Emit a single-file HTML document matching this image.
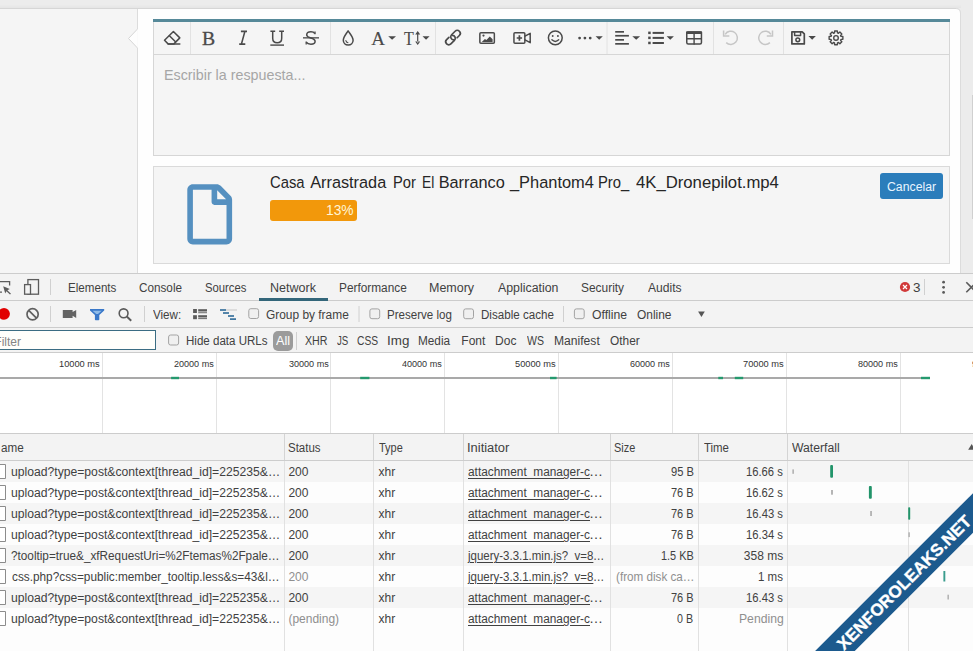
<!DOCTYPE html>
<html><head><meta charset="utf-8">
<style>
*{box-sizing:border-box;margin:0;padding:0}
html,body{width:973px;height:651px;overflow:hidden;background:#ececec;font-family:"Liberation Sans",sans-serif;position:relative}
.a{position:absolute}
.t{position:absolute;white-space:pre;line-height:1}
svg{position:absolute;left:0;top:0;overflow:visible}
</style></head><body>
<!-- ===== PAGE BACKGROUNDS ===== -->
<div class="a" style="left:0;top:5px;width:961px;height:3px;background:linear-gradient(#ebebeb,#e5e5e5)"></div>
<div class="a" style="left:0;top:8px;width:956px;height:1px;background:#d6d6d6"></div>
<div class="a" style="left:0;top:9px;width:137px;height:264px;background:#f5f5f5"></div>
<div class="a" style="left:137px;top:9px;width:1px;height:264px;background:#dcdcdc"></div>
<div class="a" style="left:138px;top:9px;width:822px;height:264px;background:#fefefe;border-top-right-radius:4px"></div>
<div class="a" style="left:960px;top:13px;width:1px;height:260px;background:#dcdcdc"></div>
<div class="a" style="left:971.5px;top:95px;width:1.5px;height:124px;background:#d0d0d0"></div>
<svg width="973" height="651">
 <path d="M137.5 29 L128.5 38.5 L137.5 48" fill="#fefefe" stroke="#d6d6d6" stroke-width="1"/>
 <rect x="137.2" y="29.5" width="1.6" height="18" fill="#fefefe"/>
 <path d="M956 8.5 Q960.5 8.5 960.5 13" fill="none" stroke="#dcdcdc"/>
</svg>
<!-- editor -->
<div class="a" style="left:153px;top:19px;width:797px;height:137px;background:#f5f5f5;border:1px solid #d6d6d6;border-top:3px solid #568999"></div>
<div class="a" style="left:153px;top:19px;width:797px;height:3px;background:#568999"></div>
<div class="a" style="left:154px;top:54px;width:795px;height:1px;background:#d6d6d6"></div>
<!-- attachment -->
<div class="a" style="left:153px;top:166px;width:797px;height:98px;background:#f5f5f5;border:1px solid #dadada"></div>
<div class="a" style="left:270px;top:200px;width:87px;height:21px;background:#f2980b;border-radius:3px"></div>
<div class="a" style="left:880px;top:173px;width:63px;height:26px;background:#2b7dbb;border-radius:3px"></div>

<!-- ===== DEVTOOLS BACKGROUNDS ===== -->
<div class="a" style="left:0;top:273px;width:973px;height:378px;background:#f3f3f3"></div>
<div class="a" style="left:0;top:273px;width:973px;height:1px;background:#cccccc"></div>
<div class="a" style="left:0;top:300px;width:973px;height:1px;background:#cccccc"></div>
<div class="a" style="left:0;top:327px;width:973px;height:1px;background:#cccccc"></div>
<div class="a" style="left:259px;top:298.4px;width:69px;height:2.2px;background:#33667a"></div>
<!-- filter input -->
<div class="a" style="left:-2px;top:330px;width:158px;height:20px;background:#fffffb;border:1px solid #3b6d82"></div>
<div class="a" style="left:273px;top:330.5px;width:19.5px;height:20.5px;background:#9b9b9b;border-radius:5px"></div>
<div class="a" style="left:0;top:352px;width:973px;height:1px;background:#cccccc"></div>
<!-- overview -->
<div class="a" style="left:0;top:353px;width:973px;height:80px;background:#ffffff"></div>
<div class="a" style="left:0;top:433px;width:973px;height:1px;background:#cccccc"></div>
<!-- header -->
<div class="a" style="left:0;top:460px;width:973px;height:1px;background:#cdcdcd"></div>
<!-- rows -->
<div class="a" style="left:0;top:461px;width:973px;height:190px;background:#fdfdfd"></div>
<div class="a" style="left:0;top:461px;width:973px;height:21px;background:#f5f5f5"></div>
<div class="a" style="left:0;top:503px;width:973px;height:21px;background:#f5f5f5"></div>
<div class="a" style="left:0;top:545px;width:973px;height:21px;background:#f5f5f5"></div>
<div class="a" style="left:0;top:587px;width:973px;height:21px;background:#f5f5f5"></div>

<svg width="973" height="651">
 <!-- ===== editor toolbar icons ===== -->
 <g stroke="#e2e2e2" stroke-width="1">
  <path d="M190.5 22 V54 M330.5 22 V54 M435.5 22 V54 M607 22 V54 M713.5 22 V54 M783.5 22 V54"/>
 </g>
 <g fill="none" stroke="#4a4a4a" stroke-width="1.5" stroke-linejoin="round" stroke-linecap="round">
  <path d="M168.3 44.1 L164.5 40.3 L173.4 31.5 L179.8 37.9 L173.7 44.1 Z"/>
  <path d="M168.3 44.1 H179.8"/>
  <path d="M169.4 35.7 L175.5 41.8"/>
  <!-- U -->
  <path d="M270.4 31.2 H275.2 M279.2 31.2 H284 M272.7 31.2 V38.2 C272.7 41 274.5 42.7 277.2 42.7 C279.9 42.7 281.7 41 281.7 38.2 V31.2" stroke-width="1.5" stroke-linecap="butt"/>
  <!-- S -->
  <path d="M314.9 33.6 C314.1 32.4 312.7 31.8 310.9 31.8 C308.4 31.8 306.7 33.1 306.7 34.9 C306.7 38.5 315.1 37.5 315.1 41.3 C315.1 43.2 313.4 44.3 310.9 44.3 C308.7 44.3 307.1 43.5 306.3 42.2" stroke-width="1.5" stroke-linecap="butt"/>
  <path d="M315 31.4 V34.3 M306.2 41.6 V44.4" stroke-width="1.3" stroke-linecap="butt"/>
  <!-- italic I -->
  <path d="M240.9 31.4 H247 M239.2 44.1 H245.3 M244.9 31.4 L241.4 44.1" stroke-width="1.6" stroke-linecap="butt"/>
  <!-- droplet -->
  <path d="M348.1 30.8 C346 34.2 343.3 37 343.3 40.3 C343.3 43.1 345.4 45 348.2 45 C351 45 353.1 43.1 353.1 40.3 C353.1 37 350.3 34.2 348.1 30.8 Z"/>
  <path d="M345.9 40.6 C346.1 41.8 346.8 42.5 348 42.7" stroke-width="1.1"/>
  <!-- link -->
  <g transform="translate(453 37.6) rotate(-45)" stroke-width="1.7">
   <path d="M-2.8 -3 L-6 -3 A3 3 0 0 0 -6 3 L-1 3 A3 3 0 0 0 1.12 -2.12"/>
   <path d="M2.8 3 L6 3 A3 3 0 0 0 6 -3 L1 -3 A3 3 0 0 0 -1.12 2.12"/>
  </g>
  <!-- image -->
  <rect x="479.85" y="32.75" width="14.5" height="10.4" rx="1"/>
  <!-- video -->
  <rect x="513.95" y="32.75" width="10.9" height="10.5" rx="1"/>
  <path d="M525 36.2 L530.2 33.3 V42.7 L525 39.8"/>
  <path d="M519.4 35.3 V40.7 M516.7 38 H522.1" stroke-width="1.7" stroke-linecap="butt"/>
  <!-- smiley -->
  <circle cx="555.3" cy="37.8" r="6.9"/>
  <path d="M551.9 39.8 Q555.3 43 558.7 39.8" stroke-width="1.4"/>
  <!-- table -->
  <rect x="686.75" y="32.1" width="14.7" height="11.95" rx="1.5" stroke-width="1.5"/>
  <path d="M694.1 33 V44 M687 38.8 H701.3" stroke-width="1.4"/>
  <!-- save -->
  <path d="M791.9 31.8 H802.2 L804.3 33.9 V43.9 H791.9 Z" stroke-width="1.7"/>
  <path d="M794.6 31.8 V35.6 H800.6 V31.8" stroke-width="1.5"/>
  <circle cx="797.8" cy="39.8" r="1.9" stroke-width="1.5"/>
  <!-- gear -->
  <path d="M842.87 36.53 L842.87 39.27 L840.98 39.39 L840.58 40.37 L841.82 41.79 L839.89 43.72 L838.47 42.48 L837.49 42.88 L837.37 44.77 L834.63 44.77 L834.51 42.88 L833.53 42.48 L832.11 43.72 L830.18 41.79 L831.42 40.37 L831.02 39.39 L829.13 39.27 L829.13 36.53 L831.02 36.41 L831.42 35.43 L830.18 34.01 L832.11 32.08 L833.53 33.32 L834.51 32.92 L834.63 31.03 L837.37 31.03 L837.49 32.92 L838.47 33.32 L839.89 32.08 L841.82 34.01 L840.58 35.43 L840.98 36.41 Z" stroke-width="1.4"/>
  <circle cx="836" cy="37.9" r="2.3" stroke-width="1.4"/>
 </g>
 <g fill="#4a4a4a">
  <rect x="270.3" y="44.4" width="13.7" height="1.4"/>
  <rect x="303" y="37.2" width="16" height="1.3"/>
  <path d="M388.2 36.2 H396 L392.1 39.7 Z M422.5 36.2 H429.6 L426.05 39.7 Z M595.6 36.2 H602.8 L599.2 39.7 Z M632.3 36.2 H640.1 L636.2 39.7 Z M666.6 36.2 H673.9 L670.25 39.7 Z M808.4 36.1 H815.9 L812.15 39.8 Z"/>
  <path d="M417.1 33.5 H418.3 V42.5 H417.1 Z M415.2 34.6 L417.7 31 L420.2 34.6 Z M415.2 41.4 L417.7 45 L420.2 41.4 Z"/>
  <circle cx="483.5" cy="35.6" r="1.1"/>
  <path d="M481.8 41.9 L484.9 38.9 L486.4 40.1 L489.8 36.4 L492.6 39.2 V41.9 Z"/>
  <circle cx="552.7" cy="36" r="0.95"/><circle cx="557.9" cy="36" r="0.95"/>
  <circle cx="579.6" cy="38.1" r="1.4"/><circle cx="584.9" cy="38.1" r="1.4"/><circle cx="590.2" cy="38.1" r="1.4"/>
  <rect x="615.2" y="31" width="8.8" height="1.7"/><rect x="615.2" y="34.9" width="13.7" height="1.7"/>
  <rect x="615.2" y="39" width="8.8" height="1.7"/><rect x="615.2" y="43" width="13.7" height="1.7"/>
  <rect x="648.2" y="31.6" width="2.5" height="2.5"/><rect x="648.2" y="36.6" width="2.5" height="2.5"/><rect x="648.2" y="41.7" width="2.5" height="2.5"/>
  <rect x="652.6" y="31.9" width="11.3" height="2"/><rect x="652.6" y="36.9" width="11.3" height="2"/><rect x="652.6" y="42" width="11.3" height="2"/>
  <rect x="686" y="31.3" width="16.2" height="2.6" rx="1"/>
 </g>
 <g fill="none" stroke="#c6c6c6" stroke-width="1.5">
  <path d="M725.2 34.3 A6.6 6.6 0 1 1 726.2 42.6"/>
  <path d="M723.6 30.4 V36.1 H729.3"/>
  <path d="M770.9 34.3 A6.6 6.6 0 1 0 769.9 42.6"/>
  <path d="M772.5 30.4 V36.1 H766.8"/>
 </g>
 <!-- file icon -->
 <g transform="translate(187.3 184.2) scale(0.1167 0.1176)"><path fill="#5590c0" d="M369.9 97.9L286 14C277 5 264.8-.1 252.1-.1H48C21.5 0 0 21.5 0 48v416c0 26.5 21.5 48 48 48h288c26.5 0 48-21.5 48-48V131.9c0-12.7-5.1-25-14.1-34zM332.1 128H256V51.9l76.1 76.1zM48 464V48h160v104c0 13.3 10.7 24 24 24h104v288H48z"/></g>

 <!-- ===== devtools icons ===== -->
 <g stroke="#d0d0d0" stroke-width="1">
  <path d="M50.5 279 V295 M924.5 279 V295 M50.5 306 V322 M144.5 306 V322 M359 306 V322 M563.5 306 V322 M296.5 332 V350"/>
 </g>
 <g fill="none" stroke="#5c5c5c" stroke-width="1.3">
  <path d="M-1 281.6 H9.6 V285.5 M2 292.2 H-1"/>
  <rect x="27.9" y="279.6" width="10.6" height="14.6"/>
  <rect x="24.6" y="284.6" width="5.9" height="9.6" fill="#f3f3f3"/>
 </g>
 <path d="M3.2 286.2 L9.8 288.9 L7.4 290.2 L11 293.8 L10 294.6 L6.4 291.2 L5.2 293.4 Z" fill="#5c5c5c"/>
 <circle cx="4" cy="313.8" r="5.9" fill="#e10000"/>
 <circle cx="32.6" cy="314.3" r="5.6" fill="none" stroke="#606060" stroke-width="1.7"/>
 <path d="M28.7 310.4 L36.5 318.2" stroke="#606060" stroke-width="1.7"/>
 <path d="M62.8 309.9 H72.6 V312 L76.2 309.9 V317.9 L72.6 315.8 V317.9 H62.8 Z" fill="#646464"/>
 <path d="M90 309 H104.2 V310.5 L99.3 315 V319.5 Q99.3 320.3 98.5 320.3 H95.7 Q94.9 320.3 94.9 319.5 V315 L90 310.5 Z" fill="#3a78c9"/>
 <path d="M92.5 310.8 H101.7 L98 314 H96.2 Z" fill="#8fbbe8"/>
 <circle cx="123.6" cy="313.3" r="4.4" fill="none" stroke="#5a5a5a" stroke-width="1.6"/>
 <path d="M126.8 316.5 L131.2 320.8" stroke="#5a5a5a" stroke-width="1.9"/>
 <g fill="#5a5a5a">
  <rect x="193.1" y="309" width="3.8" height="4"/><rect x="198.2" y="309.2" width="8.8" height="2.3"/><rect x="198.2" y="312.3" width="8.8" height="0.9"/>
  <rect x="193.1" y="315.2" width="3.8" height="4"/><rect x="198.2" y="315.2" width="8.8" height="2.3"/><rect x="198.2" y="318.2" width="8.8" height="0.9"/>
 </g>
 <g fill="#2e6a98">
  <rect x="220" y="309.2" width="6" height="1.6"/><rect x="223" y="312.2" width="6" height="1.6"/>
  <rect x="228" y="315.2" width="6" height="1.6"/><rect x="230" y="318.3" width="6" height="1.6"/>
 </g>
 <rect x="226" y="309.2" width="11" height="1.6" fill="#d6d6d6"/>
 <g fill="#f0f0f0" stroke="#a3a3a3" stroke-width="1">
  <rect x="248.8" y="308.7" width="9.8" height="9.8" rx="2"/>
  <rect x="369.9" y="308.9" width="9.8" height="9.8" rx="2"/>
  <rect x="463.7" y="308.9" width="9.8" height="9.8" rx="2"/>
  <rect x="574.4" y="308.9" width="9.8" height="9.8" rx="2"/>
  <rect x="168.6" y="335" width="10" height="10" rx="2"/>
 </g>
 <path d="M698.1 311.4 H704.8 L701.45 316.9 Z" fill="#555"/>
 <circle cx="905" cy="287" r="5.1" fill="#d13a3a"/>
 <path d="M903 285 L907 289 M907 285 L903 289" stroke="#fff" stroke-width="1.2"/>
 <g fill="#5a5a5a"><circle cx="943.6" cy="282.2" r="1.4"/><circle cx="943.6" cy="287.3" r="1.4"/><circle cx="943.6" cy="292.4" r="1.4"/></g>
 <path d="M966.3 282.3 L976.3 292.3 M976.3 282.3 L966.3 292.3" stroke="#5a5a5a" stroke-width="1.6"/>

 <!-- overview -->
 <g stroke="#e3e3e3" stroke-width="1">
  <path d="M102.5 353 V433 M216.5 353 V433 M330.5 353 V433 M444.5 353 V433 M558.5 353 V433 M672.5 353 V433 M786.5 353 V433 M900.5 353 V433"/>
 </g>
 <rect x="0" y="377" width="930" height="2" fill="#a9a9a9"/>
 <g fill="#25996e">
  <rect x="171.1" y="376.8" width="7.9" height="2.4"/><rect x="360.2" y="376.8" width="9.2" height="2.4"/>
  <rect x="550" y="376.8" width="6.6" height="2.4"/><rect x="718.3" y="376.8" width="4.7" height="2.4"/>
  <rect x="734.8" y="376.8" width="8.4" height="2.4"/><rect x="921" y="376.8" width="9" height="2.4"/>
 </g>
 <!-- table grid -->
 <g stroke="#d4d4d4" stroke-width="1">
  <path d="M284.5 434 V460 M373.5 434 V460 M463.5 434 V460 M610.5 434 V460 M698.5 434 V460 M787.5 434 V460"/>
 </g>
 <g stroke="#e1e1e1" stroke-width="1">
  <path d="M284.5 461 V651 M373.5 461 V651 M463.5 461 V651 M610.5 461 V651 M698.5 461 V651 M787.5 461 V651 M908.5 461 V651"/>
 </g>
 <path d="M968.2 449.8 L971.7 444 L975.2 449.8 Z" fill="#555"/>
 <!-- row doc icons -->
 <g fill="#ffffff" stroke="#8c8c8c" stroke-width="1">
  <path d="M-3 464.5 H5.5 V478.5 H-3"/><path d="M-3 485.5 H5.5 V499.5 H-3"/><path d="M-3 506.5 H5.5 V520.5 H-3"/><path d="M-3 527.5 H5.5 V541.5 H-3"/>
  <path d="M-3 548.5 H5.5 V562.5 H-3"/><path d="M-3 569.5 H5.5 V583.5 H-3"/><path d="M-3 590.5 H5.5 V604.5 H-3"/><path d="M-3 611.5 H5.5 V625.5 H-3"/>
 </g>
 <!-- waterfall bars -->
 <g fill="#b5b5b5">
  <rect x="792.3" y="469.4" width="1.7" height="4.4"/><rect x="831" y="490" width="2" height="4.7"/>
  <rect x="870.1" y="511" width="1.9" height="5"/><rect x="908.3" y="532.3" width="1.6" height="4.8"/>
  <rect x="947.4" y="594.7" width="1.6" height="4.8"/>
 </g>
 <g fill="#22946a">
  <rect x="830.2" y="465" width="2.8" height="12.8" rx="1"/><rect x="868.9" y="486" width="2.9" height="12.7" rx="1"/>
  <rect x="908.2" y="507.2" width="2" height="12.5" rx="0.8"/>
 </g>
 <rect x="943.4" y="571" width="1.9" height="10.5" fill="#3a9d8e"/>
</svg>
<div class="t" style="left:163.91px;top:68.33px;font-size:14.5px;color:#a6a6a6;transform:scaleX(0.9858);transform-origin:left top;">Escribir la respuesta...</div>
<div class="t" style="left:269.89px;top:173.80px;font-size:16.3px;color:#262626;transform:scaleX(0.9108);transform-origin:left top;">Casa</div>
<div class="t" style="left:310.20px;top:173.80px;font-size:16.3px;color:#262626;">Arrastrada</div>
<div class="t" style="left:392.90px;top:173.80px;font-size:16.3px;color:#262626;transform:scaleX(0.9042);transform-origin:left top;">Por</div>
<div class="t" style="left:421.55px;top:173.80px;font-size:16.3px;color:#262626;transform:scaleX(0.8462);transform-origin:left top;">El</div>
<div class="t" style="left:438.70px;top:173.80px;font-size:16.3px;color:#262626;">Barranco</div>
<div class="t" style="left:509.90px;top:173.80px;font-size:16.3px;color:#262626;transform:scaleX(1.0072);transform-origin:left top;">_Phantom4</div>
<div class="t" style="left:598.19px;top:173.80px;font-size:16.3px;color:#262626;transform:scaleX(0.9088);transform-origin:left top;">Pro_</div>
<div class="t" style="left:636.30px;top:173.80px;font-size:16.3px;color:#262626;transform:scaleX(1.0252);transform-origin:left top;">4K_Dronepilot.mp4</div>
<div class="t" style="left:326.41px;top:203.35px;font-size:14px;color:#fff6d6;transform:scaleX(0.9852);transform-origin:left top;">13%</div>
<div class="t" style="left:886.62px;top:180.52px;font-size:12.5px;color:#eaf5ff;transform:scaleX(0.9816);transform-origin:left top;">Cancelar</div>
<div class="t" style="left:202.46px;top:28.89px;font-size:19px;color:#4a4a4a;font-family:'Liberation Serif',serif;transform:scaleX(1.0364);transform-origin:left top;-webkit-text-stroke:0.3px #4a4a4a;">B</div>
<div class="t" style="left:371.30px;top:28.89px;font-size:19px;color:#4a4a4a;font-family:'Liberation Serif',serif;-webkit-text-stroke:0.15px #4a4a4a;">A</div>
<div class="t" style="left:404.20px;top:28.89px;font-size:19px;color:#4a4a4a;font-family:'Liberation Serif',serif;transform:scaleX(0.8417);transform-origin:left top;-webkit-text-stroke:0.15px #4a4a4a;">T</div>
<div class="t" style="left:67.83px;top:281.84px;font-size:12px;color:#414141;transform:scaleX(0.9673);transform-origin:left top;">Elements</div>
<div class="t" style="left:138.72px;top:281.84px;font-size:12px;color:#414141;transform:scaleX(0.9767);transform-origin:left top;">Console</div>
<div class="t" style="left:204.86px;top:281.84px;font-size:12px;color:#414141;transform:scaleX(0.9419);transform-origin:left top;">Sources</div>
<div class="t" style="left:269.76px;top:281.84px;font-size:12px;color:#414141;transform:scaleX(1.0442);transform-origin:left top;">Network</div>
<div class="t" style="left:338.91px;top:281.84px;font-size:12px;color:#414141;transform:scaleX(0.9866);transform-origin:left top;">Performance</div>
<div class="t" style="left:428.86px;top:281.84px;font-size:12px;color:#414141;transform:scaleX(1.0405);transform-origin:left top;">Memory</div>
<div class="t" style="left:497.70px;top:281.84px;font-size:12px;color:#414141;transform:scaleX(1.0293);transform-origin:left top;">Application</div>
<div class="t" style="left:580.71px;top:281.84px;font-size:12px;color:#414141;transform:scaleX(0.9929);transform-origin:left top;">Security</div>
<div class="t" style="left:647.60px;top:281.84px;font-size:12px;color:#414141;transform:scaleX(1.0091);transform-origin:left top;">Audits</div>
<div class="t" style="left:912.88px;top:281.84px;font-size:12px;color:#414141;transform:scaleX(1.1200);transform-origin:left top;">3</div>
<div class="t" style="left:153.30px;top:308.84px;font-size:12px;color:#414141;transform:scaleX(0.9679);transform-origin:left top;">View:</div>
<div class="t" style="left:265.81px;top:308.84px;font-size:12px;color:#414141;transform:scaleX(0.9927);transform-origin:left top;">Group by frame</div>
<div class="t" style="left:387.04px;top:308.84px;font-size:12px;color:#414141;transform:scaleX(0.9636);transform-origin:left top;">Preserve log</div>
<div class="t" style="left:480.73px;top:308.84px;font-size:12px;color:#414141;transform:scaleX(0.9662);transform-origin:left top;">Disable cache</div>
<div class="t" style="left:592.00px;top:308.84px;font-size:12px;color:#414141;transform:scaleX(1.0176);transform-origin:left top;">Offline</div>
<div class="t" style="left:637.20px;top:308.84px;font-size:12px;color:#414141;transform:scaleX(0.9941);transform-origin:left top;">Online</div>
<div class="t" style="left:-5.70px;top:335.64px;font-size:12px;color:#858585;">Filter</div>
<div class="t" style="left:185.54px;top:334.84px;font-size:12px;color:#414141;transform:scaleX(0.9627);transform-origin:left top;">Hide data URLs</div>
<div class="t" style="left:275.80px;top:334.84px;font-size:12px;color:#ffffff;transform:scaleX(1.0538);transform-origin:left top;">All</div>
<div class="t" style="left:304.50px;top:334.84px;font-size:12px;color:#414141;transform:scaleX(0.8880);transform-origin:left top;">XHR</div>
<div class="t" style="left:336.60px;top:334.84px;font-size:12px;color:#414141;transform:scaleX(0.8071);transform-origin:left top;">JS</div>
<div class="t" style="left:356.94px;top:334.84px;font-size:12px;color:#414141;transform:scaleX(0.8565);transform-origin:left top;">CSS</div>
<div class="t" style="left:386.78px;top:334.84px;font-size:12px;color:#414141;transform:scaleX(1.1167);transform-origin:left top;">Img</div>
<div class="t" style="left:418.42px;top:334.84px;font-size:12px;color:#414141;transform:scaleX(0.9812);transform-origin:left top;">Media</div>
<div class="t" style="left:461.30px;top:334.84px;font-size:12px;color:#414141;">Font</div>
<div class="t" style="left:495.10px;top:334.84px;font-size:12px;color:#414141;">Doc</div>
<div class="t" style="left:527.00px;top:334.84px;font-size:12px;color:#414141;transform:scaleX(0.8789);transform-origin:left top;">WS</div>
<div class="t" style="left:553.79px;top:334.84px;font-size:12px;color:#414141;transform:scaleX(1.0091);transform-origin:left top;">Manifest</div>
<div class="t" style="left:610.30px;top:334.84px;font-size:12px;color:#414141;transform:scaleX(0.9900);transform-origin:left top;">Other</div>
<div class="t" style="left:59.43px;top:358.87px;font-size:9.6px;color:#333333;transform:scaleX(0.9659);transform-origin:left top;">10000 ms</div>
<div class="t" style="left:174.40px;top:358.87px;font-size:9.6px;color:#333333;transform:scaleX(0.9429);transform-origin:left top;">20000 ms</div>
<div class="t" style="left:288.60px;top:358.87px;font-size:9.6px;color:#333333;transform:scaleX(0.9429);transform-origin:left top;">30000 ms</div>
<div class="t" style="left:402.10px;top:358.87px;font-size:9.6px;color:#333333;transform:scaleX(0.9429);transform-origin:left top;">40000 ms</div>
<div class="t" style="left:515.43px;top:358.87px;font-size:9.6px;color:#333333;transform:scaleX(0.9659);transform-origin:left top;">50000 ms</div>
<div class="t" style="left:630.40px;top:358.87px;font-size:9.6px;color:#333333;transform:scaleX(0.9429);transform-origin:left top;">60000 ms</div>
<div class="t" style="left:743.43px;top:358.87px;font-size:9.6px;color:#333333;transform:scaleX(0.9659);transform-origin:left top;">70000 ms</div>
<div class="t" style="left:857.90px;top:358.87px;font-size:9.6px;color:#333333;transform:scaleX(0.9429);transform-origin:left top;">80000 ms</div>
<div class="t" style="left:971.90px;top:358.87px;font-size:9.6px;color:#333333;transform:scaleX(0.9429);transform-origin:left top;">90000 ms</div>
<div class="t" style="left:1.00px;top:441.84px;font-size:12px;color:#414141;transform:scaleX(0.9739);transform-origin:left top;">ame</div>
<div class="t" style="left:288.34px;top:441.84px;font-size:12px;color:#414141;transform:scaleX(0.9576);transform-origin:left top;">Status</div>
<div class="t" style="left:378.60px;top:441.84px;font-size:12px;color:#414141;transform:scaleX(0.9115);transform-origin:left top;">Type</div>
<div class="t" style="left:467.12px;top:441.84px;font-size:12px;color:#414141;transform:scaleX(1.0763);transform-origin:left top;">Initiator</div>
<div class="t" style="left:614.49px;top:441.84px;font-size:12px;color:#414141;transform:scaleX(0.9091);transform-origin:left top;">Size</div>
<div class="t" style="left:703.80px;top:441.84px;font-size:12px;color:#414141;transform:scaleX(0.9500);transform-origin:left top;">Time</div>
<div class="t" style="left:792.30px;top:441.84px;font-size:12px;color:#414141;transform:scaleX(1.0174);transform-origin:left top;">Waterfall</div>
<div class="t" style="left:10.59px;top:465.84px;font-size:12px;color:#414141;transform:scaleX(1.0133);transform-origin:left top;">upload?type=post&amp;context[thread_id]=225235&amp;…</div>
<div class="t" style="left:288.40px;top:465.84px;font-size:12px;color:#414141;">200</div>
<div class="t" style="left:378.60px;top:465.84px;font-size:12px;color:#414141;">xhr</div>
<div class="t" style="left:468.20px;top:465.84px;font-size:12px;color:#414141;transform:scaleX(0.9886);transform-origin:left top;text-decoration:underline;text-underline-offset:2.3px;">attachment_manager-c</div>
<div class="t" style="left:589.17px;top:465.84px;font-size:12px;color:#414141;transform:scaleX(1.1667);transform-origin:left top;">…</div>
<div class="t" style="left:670.97px;top:465.84px;font-size:12px;color:#414141;transform:scaleX(0.9304);transform-origin:left top;">95 B</div>
<div class="t" style="left:746.37px;top:465.84px;font-size:12px;color:#414141;transform:scaleX(0.9342);transform-origin:left top;">16.66 s</div>
<div class="t" style="left:10.59px;top:486.84px;font-size:12px;color:#414141;transform:scaleX(1.0133);transform-origin:left top;">upload?type=post&amp;context[thread_id]=225235&amp;…</div>
<div class="t" style="left:288.40px;top:486.84px;font-size:12px;color:#414141;">200</div>
<div class="t" style="left:378.60px;top:486.84px;font-size:12px;color:#414141;">xhr</div>
<div class="t" style="left:468.20px;top:486.84px;font-size:12px;color:#414141;transform:scaleX(0.9886);transform-origin:left top;text-decoration:underline;text-underline-offset:2.3px;">attachment_manager-c</div>
<div class="t" style="left:589.17px;top:486.84px;font-size:12px;color:#414141;transform:scaleX(1.1667);transform-origin:left top;">…</div>
<div class="t" style="left:671.30px;top:486.84px;font-size:12px;color:#414141;transform:scaleX(0.9167);transform-origin:left top;">76 B</div>
<div class="t" style="left:746.37px;top:486.84px;font-size:12px;color:#414141;transform:scaleX(0.9342);transform-origin:left top;">16.62 s</div>
<div class="t" style="left:10.59px;top:507.84px;font-size:12px;color:#414141;transform:scaleX(1.0133);transform-origin:left top;">upload?type=post&amp;context[thread_id]=225235&amp;…</div>
<div class="t" style="left:288.40px;top:507.84px;font-size:12px;color:#414141;">200</div>
<div class="t" style="left:378.60px;top:507.84px;font-size:12px;color:#414141;">xhr</div>
<div class="t" style="left:468.20px;top:507.84px;font-size:12px;color:#414141;transform:scaleX(0.9886);transform-origin:left top;text-decoration:underline;text-underline-offset:2.3px;">attachment_manager-c</div>
<div class="t" style="left:589.17px;top:507.84px;font-size:12px;color:#414141;transform:scaleX(1.1667);transform-origin:left top;">…</div>
<div class="t" style="left:671.30px;top:507.84px;font-size:12px;color:#414141;transform:scaleX(0.9167);transform-origin:left top;">76 B</div>
<div class="t" style="left:746.16px;top:507.84px;font-size:12px;color:#414141;transform:scaleX(0.9395);transform-origin:left top;">16.43 s</div>
<div class="t" style="left:10.59px;top:528.84px;font-size:12px;color:#414141;transform:scaleX(1.0133);transform-origin:left top;">upload?type=post&amp;context[thread_id]=225235&amp;…</div>
<div class="t" style="left:288.40px;top:528.84px;font-size:12px;color:#414141;">200</div>
<div class="t" style="left:378.60px;top:528.84px;font-size:12px;color:#414141;">xhr</div>
<div class="t" style="left:468.20px;top:528.84px;font-size:12px;color:#414141;transform:scaleX(0.9886);transform-origin:left top;text-decoration:underline;text-underline-offset:2.3px;">attachment_manager-c</div>
<div class="t" style="left:589.17px;top:528.84px;font-size:12px;color:#414141;transform:scaleX(1.1667);transform-origin:left top;">…</div>
<div class="t" style="left:671.30px;top:528.84px;font-size:12px;color:#414141;transform:scaleX(0.9167);transform-origin:left top;">76 B</div>
<div class="t" style="left:746.16px;top:528.84px;font-size:12px;color:#414141;transform:scaleX(0.9395);transform-origin:left top;">16.34 s</div>
<div class="t" style="left:10.62px;top:549.84px;font-size:12px;color:#414141;transform:scaleX(0.9798);transform-origin:left top;">?tooltip=true&amp;_xfRequestUri=%2Ftemas%2Fpale…</div>
<div class="t" style="left:288.40px;top:549.84px;font-size:12px;color:#414141;">200</div>
<div class="t" style="left:378.60px;top:549.84px;font-size:12px;color:#414141;">xhr</div>
<div class="t" style="left:468.20px;top:549.84px;font-size:12px;color:#414141;transform:scaleX(0.9565);transform-origin:left top;text-decoration:underline;text-underline-offset:2.3px;">jquery-3.3.1.min.js?_v=8</div>
<div class="t" style="left:593.11px;top:549.84px;font-size:12px;color:#414141;transform:scaleX(0.9444);transform-origin:left top;">…</div>
<div class="t" style="left:660.59px;top:549.84px;font-size:12px;color:#414141;transform:scaleX(0.9086);transform-origin:left top;">1.5 KB</div>
<div class="t" style="left:743.80px;top:549.84px;font-size:12px;color:#414141;">358 ms</div>
<div class="t" style="left:11.60px;top:570.84px;font-size:12px;color:#414141;transform:scaleX(0.9834);transform-origin:left top;">css.php?css=public:member_tooltip.less&amp;s=43&amp;l…</div>
<div class="t" style="left:288.40px;top:570.84px;font-size:12px;color:#8f8f8f;">200</div>
<div class="t" style="left:378.60px;top:570.84px;font-size:12px;color:#414141;">xhr</div>
<div class="t" style="left:468.20px;top:570.84px;font-size:12px;color:#414141;transform:scaleX(0.9565);transform-origin:left top;text-decoration:underline;text-underline-offset:2.3px;">jquery-3.3.1.min.js?_v=8</div>
<div class="t" style="left:593.11px;top:570.84px;font-size:12px;color:#414141;transform:scaleX(0.9444);transform-origin:left top;">…</div>
<div class="t" style="left:616.43px;top:570.84px;font-size:12px;color:#8f8f8f;transform:scaleX(0.9731);transform-origin:left top;">(from disk ca…</div>
<div class="t" style="left:757.84px;top:570.84px;font-size:12px;color:#414141;transform:scaleX(0.9600);transform-origin:left top;">1 ms</div>
<div class="t" style="left:10.59px;top:591.84px;font-size:12px;color:#414141;transform:scaleX(1.0133);transform-origin:left top;">upload?type=post&amp;context[thread_id]=225235&amp;…</div>
<div class="t" style="left:288.40px;top:591.84px;font-size:12px;color:#414141;">200</div>
<div class="t" style="left:378.60px;top:591.84px;font-size:12px;color:#414141;">xhr</div>
<div class="t" style="left:468.20px;top:591.84px;font-size:12px;color:#414141;transform:scaleX(0.9886);transform-origin:left top;text-decoration:underline;text-underline-offset:2.3px;">attachment_manager-c</div>
<div class="t" style="left:589.17px;top:591.84px;font-size:12px;color:#414141;transform:scaleX(1.1667);transform-origin:left top;">…</div>
<div class="t" style="left:671.30px;top:591.84px;font-size:12px;color:#414141;transform:scaleX(0.9167);transform-origin:left top;">76 B</div>
<div class="t" style="left:746.16px;top:591.84px;font-size:12px;color:#414141;transform:scaleX(0.9395);transform-origin:left top;">16.43 s</div>
<div class="t" style="left:10.59px;top:612.84px;font-size:12px;color:#414141;transform:scaleX(1.0133);transform-origin:left top;">upload?type=post&amp;context[thread_id]=225235&amp;…</div>
<div class="t" style="left:288.40px;top:612.84px;font-size:12px;color:#8f8f8f;">(pending)</div>
<div class="t" style="left:378.60px;top:612.84px;font-size:12px;color:#414141;">xhr</div>
<div class="t" style="left:468.20px;top:612.84px;font-size:12px;color:#414141;transform:scaleX(0.9886);transform-origin:left top;text-decoration:underline;text-underline-offset:2.3px;">attachment_manager-c</div>
<div class="t" style="left:589.17px;top:612.84px;font-size:12px;color:#414141;transform:scaleX(1.1667);transform-origin:left top;">…</div>
<div class="t" style="left:677.30px;top:612.84px;font-size:12px;color:#414141;transform:scaleX(0.8889);transform-origin:left top;">0 B</div>
<div class="t" style="left:739.19px;top:612.84px;font-size:12px;color:#8f8f8f;transform:scaleX(1.0143);transform-origin:left top;">Pending</div>
<!-- watermark -->
<div class="a" style="left:704.4px;top:568.4px;width:400px;height:28.3px;background:#1c5a8e;transform:rotate(-45deg);transform-origin:200px 14.15px"></div>
<div class="t" style="left:705px;top:569px;width:400px;height:28.3px;line-height:28.3px;text-align:center;transform:rotate(-45deg);transform-origin:200px 14.15px;color:#fff;font-weight:700;font-size:17px;letter-spacing:0.1px;-webkit-text-stroke:0.35px #fff">XENFOROLEAKS.NET</div>
</body></html>
